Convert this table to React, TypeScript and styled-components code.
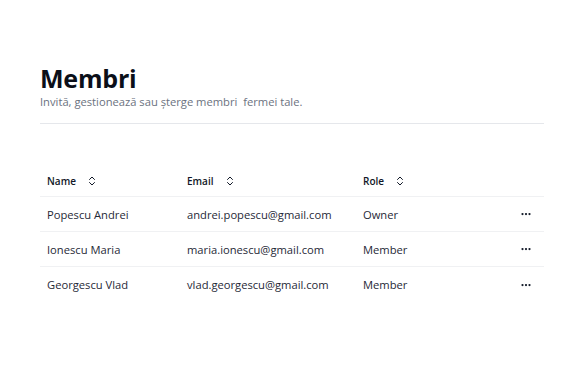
import React from 'react'
import styled, { createGlobalStyle } from 'styled-components'
import { ChevronsUpDown, Ellipsis } from 'lucide-react'

const GlobalStyle = createGlobalStyle`
  *, *::before, *::after {
    box-sizing: border-box;
  }
  body {
    margin: 0;
    background: #fff;
    font-family: 'Open Sans', 'Noto Sans', sans-serif;
    color: #111827;
  }
`

const Page = styled.div`
  width: 544px;
  padding: 62px 0 0 40px;
`

const Title = styled.h1`
  margin: 0;
  font-size: 25px;
  line-height: 32px;
  font-weight: 700;
  color: #0b0f19;
  letter-spacing: -0.2px;
`

const Subtitle = styled.p`
  margin: 0;
  font-size: 11.2px;
  line-height: 16px;
  color: #6b7280;
`

const Divider = styled.hr`
  margin: 13px 0 0;
  border: 0;
  border-top: 1px solid #e5e7eb;
`

const Table = styled.div`
  margin-top: 42px;
`

const Row = styled.div<{ $header?: boolean }>`
  display: grid;
  grid-template-columns: 140px 176px 1fr 40px;
  align-items: center;
  height: ${({ $header }) => ($header ? '31px' : '35px')};
  border-bottom: 1px solid #f0f1f3;
  &:last-child {
    border-bottom: 0;
  }
`

const HeadCell = styled.div`
  display: flex;
  align-items: center;
  gap: 10px;
  padding-left: 7px;
  font-size: 10px;
  font-weight: 600;
  color: #111827;
`

const Cell = styled.div`
  padding-left: 7px;
  font-size: 11.2px;
  color: #1f2937;
`

const Actions = styled.div`
  display: flex;
  justify-content: flex-end;
  padding-right: 12px;
  color: #111827;
`

const members = [
  { name: 'Popescu Andrei', email: 'andrei.popescu@gmail.com', role: 'Owner' },
  { name: 'Ionescu Maria', email: 'maria.ionescu@gmail.com', role: 'Member' },
  { name: 'Georgescu Vlad', email: 'vlad.georgescu@gmail.com', role: 'Member' },
]

const App = () => (
  <>
    <GlobalStyle />
    <Page>
      <Title>Membri</Title>
      <Subtitle>Invită, gestionează sau șterge membri&nbsp; fermei tale.</Subtitle>
      <Divider />
      <Table>
        <Row $header>
          <HeadCell>
            Name <ChevronsUpDown size={12} strokeWidth={2} />
          </HeadCell>
          <HeadCell>
            Email <ChevronsUpDown size={12} strokeWidth={2} />
          </HeadCell>
          <HeadCell>
            Role <ChevronsUpDown size={12} strokeWidth={2} />
          </HeadCell>
          <div />
        </Row>
        {members.map((m) => (
          <Row key={m.email}>
            <Cell>{m.name}</Cell>
            <Cell>{m.email}</Cell>
            <Cell>{m.role}</Cell>
            <Actions>
              <Ellipsis size={12} strokeWidth={2.5} />
            </Actions>
          </Row>
        ))}
      </Table>
    </Page>
  </>
)

export default App
